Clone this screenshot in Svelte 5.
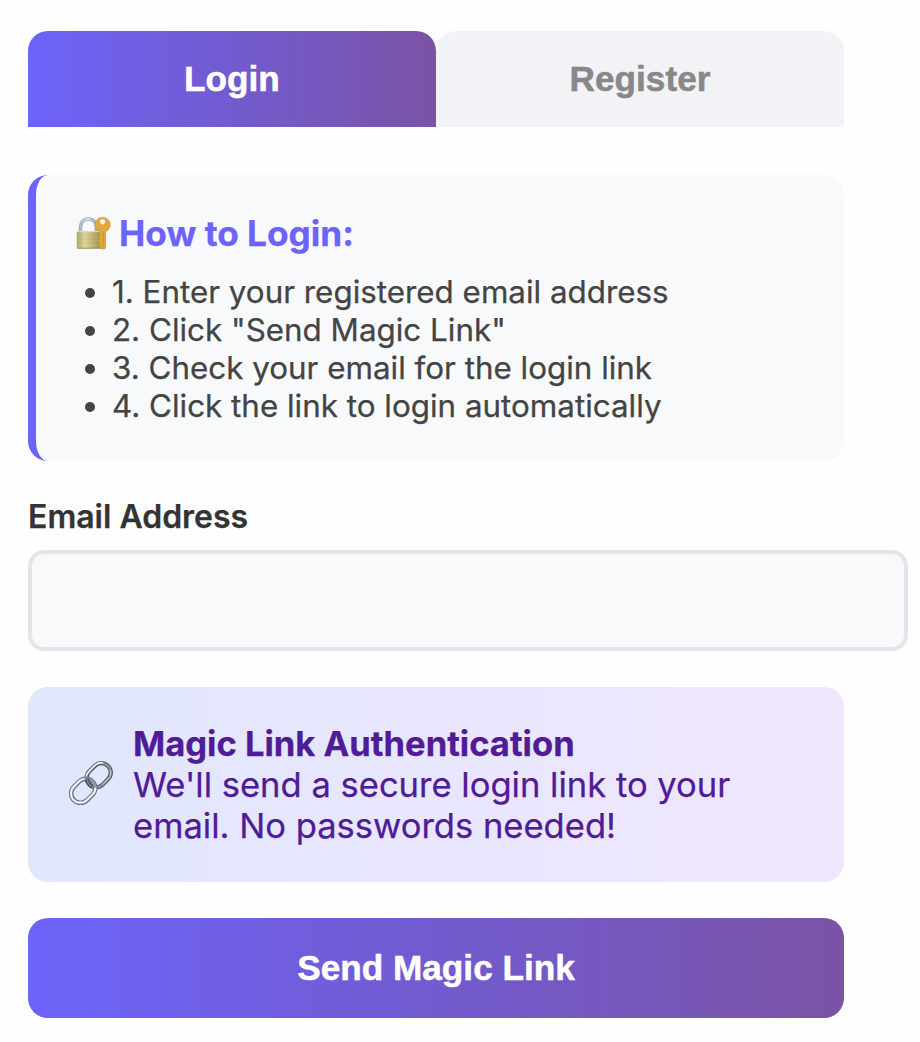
<script>
  const steps = [
    'Enter your registered email address',
    'Click "Send Magic Link"',
    'Check your email for the login link',
    'Click the link to login automatically',
  ];
  let email = $state('');
</script>

<main>
  <nav>
    <button class="tab active">Login</button>
    <button class="tab">Register</button>
  </nav>

  <section class="guide">
    <h2>
      <svg class="lock" viewBox="0 0 36 36" aria-hidden="true">
        <defs>
          <linearGradient id="brass" x1="0" x2="1" y1="0" y2="0">
            <stop offset="0" stop-color="#b0a76c" />
            <stop offset=".28" stop-color="#dcd69e" />
            <stop offset=".65" stop-color="#b5aa68" />
            <stop offset="1" stop-color="#8e814b" />
          </linearGradient>
          <linearGradient id="steel" x1="0" x2="1" y1="0" y2="0">
            <stop offset="0" stop-color="#a9bbcd" />
            <stop offset=".45" stop-color="#d8e7f6" />
            <stop offset="1" stop-color="#92a5ba" />
          </linearGradient>
        </defs>
        <path d="M4.5 16V11.5C4.5 6 8 2.9 12.4 2.9s8 3.1 8 8.6V16" fill="none" stroke="#8797aa" stroke-width="3.4" />
        <path d="M4.5 16V11.5C4.5 6 8 2.9 12.4 2.9s8 3.1 8 8.6V16" fill="none" stroke="url(#steel)" stroke-width="2.4" />
        <rect x=".8" y="15" width="28.8" height="17.6" rx="1" fill="url(#brass)" />
        <path d="M1.3 15.5h28" stroke="#e3dda0" />
        <path d="M1.3 19h28M1.3 23h28M1.3 27h28" stroke="#857b3e" stroke-opacity=".14" stroke-width=".8" />
        <path d="M1.3 32.2h28" stroke="#8b8051" stroke-width=".8" />
        <path fill-rule="evenodd" d="M26.6 1.2a7.6 7.6 0 0 1 2.6 14.8v15.6l-2.3 2-2.4-1.9v-1.3l-1.5-.7v-2l1.2-.8-1.2-.9v-2.1l1.2-.8-1.2-.9V20l1-.7V16A7.6 7.6 0 0 1 26.6 1.2Zm0 1.8a2.8 2.8 0 1 0 0 5.6 2.8 2.8 0 0 0 0-5.6Z" fill="#e0a83e" stroke="#c99236" stroke-width=".4" />
        <path d="M27.4 16v15.5" stroke="#c58c31" stroke-width=".7" />
      </svg>
      <span>How to Login:</span>
    </h2>
    <ul>
      {#each steps as step, i}
        <li>{i + 1}. {step}</li>
      {/each}
    </ul>
  </section>

  <label for="email">Email Address</label>
  <input id="email" type="email" bind:value={email} />

  <section class="magic">
    <svg class="chain" viewBox="0 0 45 45" aria-hidden="true">
      <g fill="none">
        <g transform="rotate(-45 30.7 13.3)">
          <rect x="17.5" y="3.9" width="26.4" height="18.8" rx="9.4" stroke="#4f4b55" stroke-width="4.2" />
          <rect x="17.3" y="3.7" width="26.6" height="19" rx="9.5" stroke="#8a93a1" stroke-width="2.4" />
          <path d="M18.8 8.5Q20.8 3.6 26.3 3.6h8.6q5.4 0 7.7 4.2" stroke="#e2eef8" stroke-width="1.7" />
          <path d="M27 22.5h8q5 0 7.8-4.6" stroke="#bcc2cc" stroke-width="1.2" />
        </g>
        <g transform="rotate(-45 15.2 28.8)">
          <rect x="2" y="19.4" width="26.4" height="18.8" rx="9.4" stroke="#555d6c" stroke-width="4.4" />
          <rect x="1.9" y="19.3" width="26.6" height="18.8" rx="9.4" stroke="#8f9baa" stroke-width="3.1" />
          <path d="M24.5 21.2Q22.4 19.2 19.5 19.2h-8.2a9.4 9.4 0 0 0 0 18.8h8.2q4 0 6.5-2.8" stroke="#eef6fd" stroke-width="1.9" />
        </g>
        <path d="M20 16.5q-1.1 4.5 4.1 8.5" stroke="#51474b" stroke-width="3.6" />
        <path d="M19.6 17q-.7 4 4.1 7.5" stroke="#918688" stroke-width="1.3" />
      </g>
    </svg>
    <p>
      <strong>Magic Link Authentication</strong><br />
      We'll send a secure login link to your email. No passwords needed!
    </p>
  </section>

  <button class="send">Send Magic Link</button>
</main>

<style>
  :global(body) { margin: 0; background: #fefefe; }
  main {
    box-sizing: border-box;
    width: 872px;
    padding: 31px 28px 24px;
    display: flex;
    flex-direction: column;
    font-family: Inter, sans-serif;
    -webkit-text-stroke: 0.25px currentColor;
  }
  button {
    border: 0;
    padding: 0;
    font: bold 35.2px "Liberation Sans", Arial, sans-serif;
    -webkit-text-stroke: 0.5px currentColor;
  }
  nav { display: grid; grid-template-columns: 1fr 1fr; height: 96px; margin-bottom: 48px; }
  .tab { border-radius: 20px 20px 0 0; background: #f3f2f7; color: #888; }
  .active, .send { color: #fff; background: linear-gradient(90deg, #6c63f9, #7953a5); }
  .guide {
    box-sizing: border-box;
    height: 286px;
    border-left: 8px solid #6c63f8;
    border-radius: 20px;
    padding: 37px 40px;
    background: #f7f9fb;
  }
  h2 {
    display: flex;
    align-items: center;
    gap: 7px;
    height: 43px;
    margin: 0 0 18px;
    color: #6c63fa;
    font-size: 35.2px;
    font-weight: 700;
    line-height: 43px;
  }
  .lock { width: 36px; height: 36px; flex: none; }
  ul { margin: 0; padding-left: 36px; color: #444; font-size: 31.36px; line-height: 38px; }
  label { margin-top: 36px; color: #333; font-size: 32px; line-height: 39px; font-weight: 600; }
  input {
    box-sizing: border-box;
    width: 880px;
    height: 101px;
    margin: 14px 0 36px;
    border: 4px solid #e2e5ea;
    border-radius: 16px;
    padding: 28px;
    background: #f8f9fb;
    font: 32px Inter, sans-serif;
    outline: 0;
  }
  .magic {
    box-sizing: border-box;
    height: 195px;
    display: flex;
    align-items: center;
    gap: 20px;
    padding: 0 40px;
    border-radius: 20px;
    background: linear-gradient(90deg, #e0e7fd, #f0e6fd);
    color: #4f1b96;
  }
  .chain { width: 45px; height: 45px; flex: none; overflow: visible; }
  p { margin: 0; font-size: 34.56px; line-height: 41px; }
  strong { font-weight: 700; }
  .send { height: 100px; margin-top: 36px; border-radius: 20px; }
</style>
